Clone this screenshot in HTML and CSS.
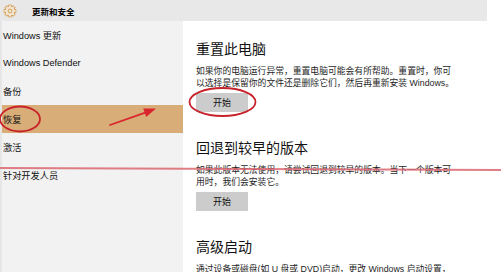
FILE: index.html
```html
<!DOCTYPE html>
<html lang="zh-CN">
<head>
<meta charset="utf-8">
<title>更新和安全</title>
<link rel="stylesheet" href="styles.css">
</head>
<body>
<div class="screen">
  <header class="topbar">
    <div class="brand">
      <svg class="gear" viewBox="0 0 16 16" width="14" height="14" aria-hidden="true">
        <defs>
          <g id="gearshape">
            <circle cx="8" cy="8" r="5"/>
            <rect x="6.8" y="1.6" width="2.4" height="3"/>
            <rect x="6.8" y="1.6" width="2.4" height="3" transform="rotate(45 8 8)"/>
            <rect x="6.8" y="1.6" width="2.4" height="3" transform="rotate(90 8 8)"/>
            <rect x="6.8" y="1.6" width="2.4" height="3" transform="rotate(135 8 8)"/>
            <rect x="6.8" y="1.6" width="2.4" height="3" transform="rotate(180 8 8)"/>
            <rect x="6.8" y="1.6" width="2.4" height="3" transform="rotate(225 8 8)"/>
            <rect x="6.8" y="1.6" width="2.4" height="3" transform="rotate(270 8 8)"/>
            <rect x="6.8" y="1.6" width="2.4" height="3" transform="rotate(315 8 8)"/>
          </g>
        </defs>
        <use href="#gearshape" fill="#d39c50" stroke="#d39c50" stroke-width="1.7"/>
        <use href="#gearshape" fill="#f1e6d6"/>
        <circle cx="8" cy="8" r="2.2" fill="none" stroke="#d39c50" stroke-width="1.1"/>
      </svg>
      <span class="brand-title">更新和安全</span>
    </div>
    <div class="topfill"></div>
    <div class="topgap"></div>
  </header>
  <div class="main">
    <nav class="sidebar">
      <div class="nav-item">Windows 更新</div>
      <div class="nav-item">Windows Defender</div>
      <div class="nav-item">备份</div>
      <div class="nav-item active">恢复</div>
      <div class="nav-item">激活</div>
      <div class="nav-item">针对开发人员</div>
    </nav>
    <section class="content">
      <div class="block">
        <h2 class="block-title">重置此电脑</h2>
        <p class="block-text">如果你的电脑运行异常，重置电脑可能会有所帮助。重置时，你可<br>以选择是保留你的文件还是删除它们，然后再重新安装 Windows。</p>
        <button class="btn" type="button">开始</button>
      </div>
      <div class="block">
        <h2 class="block-title">回退到较早的版本</h2>
        <p class="block-text">如果此版本无法使用，请尝试回退到较早的版本。当下一个版本可<br>用时，我们会安装它。</p>
        <button class="btn" type="button">开始</button>
      </div>
      <div class="block">
        <h2 class="block-title">高级启动</h2>
        <p class="block-text">通过设备或磁盘(如 U 盘或 DVD)启动，更改 Windows 启动设置，</p>
      </div>
    </section>
  </div>
  <svg class="annotations" viewBox="0 0 501 272" width="501" height="272" aria-hidden="true">
    <line x1="0" y1="168" x2="501" y2="170" stroke="#da6670" stroke-width="2" stroke-opacity="0.85"/>
    <ellipse cx="20" cy="119" rx="20" ry="12.5" fill="none" stroke="#c8232a" stroke-width="1.8"/>
    <ellipse cx="222.5" cy="102" rx="33" ry="14" fill="none" stroke="#c8232a" stroke-width="1.8"/>
    <line x1="110" y1="125" x2="146" y2="112.3" stroke="#d9262c" stroke-width="1.8" stroke-linecap="round"/>
    <polygon points="156,108.6 146.2,117 143.2,108.4" fill="#d9262c"/>
  </svg>
</div>
</body>
</html>
```

FILE: styles.css
```css
html, body {
  margin: 0;
  padding: 0;
}

body {
  width: 501px;
  height: 272px;
  overflow: hidden;
  font-family: "Liberation Sans", "Noto Sans CJK SC", sans-serif;
  background: #ffffff;
}

.screen {
  position: relative;
  width: 501px;
  height: 272px;
  background: #ffffff;
  overflow: hidden;
}

.topbar {
  display: flex;
  height: 21px;
  background: #e8e8e8;
}

.brand {
  width: 183px;
  box-sizing: border-box;
  display: flex;
  align-items: center;
  gap: 15px;
  padding-left: 3px;
}

.gear {
  display: block;
  flex: none;
}

.brand-title {
  font-size: 8.5px;
  font-weight: bold;
  color: #000000;
}

.topfill {
  flex: 1;
}

.topgap {
  width: 14px;
  background: #ffffff;
}

.main {
  display: flex;
  height: 251px;
}

.sidebar {
  width: 183px;
  flex: none;
  box-sizing: border-box;
  background: #f2f2f2;
  border-left: 2px solid #e6e6e6;
}

.nav-item {
  height: 28px;
  display: flex;
  align-items: center;
  padding-left: 1px;
  font-size: 9.2px;
  color: #111111;
}

.nav-item.active {
  background: #d9ad78;
}

.content {
  flex: 1;
  padding: 18px 0 0 13px;
}

.block + .block {
  margin-top: 26px;
}

.block-title {
  margin: 0;
  font-size: 14px;
  line-height: 20px;
  font-weight: normal;
  color: #111111;
}

.block-text {
  margin: 7px 0 4px;
  font-size: 8.8px;
  line-height: 11.5px;
  color: #1e1e1e;
  white-space: nowrap;
}

.btn {
  display: flex;
  align-items: center;
  justify-content: center;
  width: 52px;
  height: 19px;
  padding: 0;
  border: 0;
  background: #cccccc;
  font-family: "Liberation Sans", "Noto Sans CJK SC", sans-serif;
  font-size: 9px;
  color: #111111;
}

.annotations {
  position: absolute;
  left: 0;
  top: 0;
  pointer-events: none;
}
```
